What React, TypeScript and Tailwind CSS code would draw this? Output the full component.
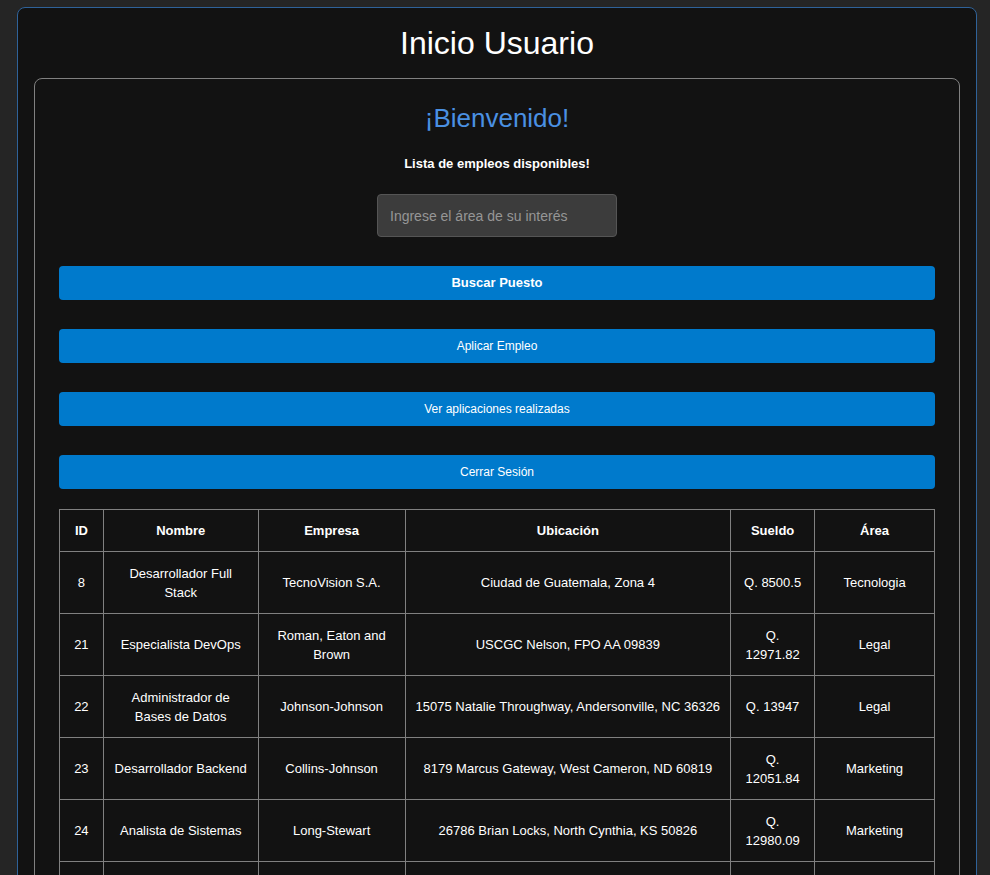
const jobs = [
  { id: 8, name: "Desarrollador Full Stack", company: "TecnoVision S.A.", place: "Ciudad de Guatemala, Zona 4", pay: "Q. 8500.5", area: "Tecnologia" },
  { id: 21, name: "Especialista DevOps", company: "Roman, Eaton and Brown", place: "USCGC Nelson, FPO AA 09839", pay: "Q. 12971.82", area: "Legal" },
  { id: 22, name: "Administrador de Bases de Datos", company: "Johnson-Johnson", place: "15075 Natalie Throughway, Andersonville, NC 36326", pay: "Q. 13947", area: "Legal" },
  { id: 23, name: "Desarrollador Backend", company: "Collins-Johnson", place: "8179 Marcus Gateway, West Cameron, ND 60819", pay: "Q. 12051.84", area: "Marketing" },
  { id: 24, name: "Analista de Sistemas", company: "Long-Stewart", place: "26786 Brian Locks, North Cynthia, KS 50826", pay: "Q. 12980.09", area: "Marketing" },
];

const columns = [
  { label: "ID", width: "w-[5%]" },
  { label: "Nombre", width: "w-[17.7%]" },
  { label: "Empresa", width: "w-[16.8%]" },
  { label: "Ubicación", width: "w-[37.2%]" },
  { label: "Sueldo", width: "w-[9.6%]" },
  { label: "Área", width: "w-[13.7%]" },
];

const headCell = "border border-[#808080] px-2.5 py-[11px]";
const cell = "h-[62px] border border-[#808080] px-2.5";
const action = "h-[34px] w-full rounded-[4px] bg-[#007acc]";

export default function App() {
  return (
    <div className="min-h-screen bg-[#252525] pl-[17px] pr-[13px] pt-[7px] font-['Liberation_Sans',Arial,sans-serif] text-white">
      <main className="rounded-[8px] border border-[#2f6299] bg-[#121212] p-4">
        <h1 className="text-center text-[32px] leading-[38px]">Inicio Usuario</h1>
        <section className="mt-4 rounded-[8px] border border-[#808080] p-6 text-center">
          <h2 className="text-[26px] leading-[30px] text-[#4a90e2]">¡Bienvenido!</h2>
          <p className="mt-[21px] text-[13px] leading-[20px] font-bold">Lista de empleos disponibles!</p>
          <input
            type="text"
            aria-label="Área de interés"
            placeholder="Ingrese el área de su interés"
            className="mt-5 h-[43px] w-[240px] rounded-[4px] border border-[#555555] bg-[#3c3c3c] px-3 text-[14px] placeholder:text-[#969696]"
          />
          <div className="mt-[29px] flex flex-col gap-[29px] text-[12px]">
            <button className={`${action} text-[13px] font-bold`}>Buscar Puesto</button>
            <button className={action}>Aplicar Empleo</button>
            <button className={action}>Ver aplicaciones realizadas</button>
            <button className={action}>Cerrar Sesión</button>
          </div>
          <table className="mt-5 w-full table-fixed border-collapse text-[13px] leading-[19px]">
            <thead>
              <tr>
                {columns.map((c) => (
                  <th key={c.label} className={`${headCell} ${c.width}`}>{c.label}</th>
                ))}
              </tr>
            </thead>
            <tbody>
              {jobs.map((j) => (
                <tr key={j.id}>
                  <td className={cell}>{j.id}</td>
                  <td className={cell}>{j.name}</td>
                  <td className={cell}>{j.company}</td>
                  <td className={cell}>{j.place}</td>
                  <td className={cell}>{j.pay}</td>
                  <td className={cell}>{j.area}</td>
                </tr>
              ))}
              <tr>
                {columns.map((c) => (
                  <td key={c.label} className={cell} />
                ))}
              </tr>
            </tbody>
          </table>
        </section>
      </main>
    </div>
  );
}
